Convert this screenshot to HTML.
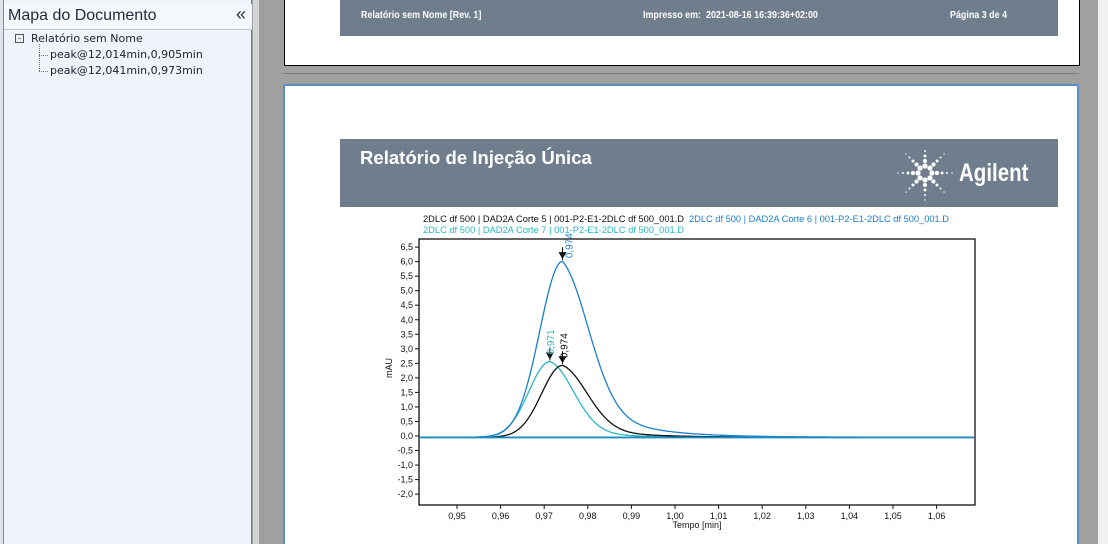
<!DOCTYPE html>
<html><head><meta charset="utf-8"><style>
html,body{overflow:hidden}
body{margin:0;width:1108px;height:544px;overflow:hidden;background:#a0a0a0;font-family:"Liberation Sans",sans-serif;position:relative}
.abs{position:absolute}
#left{left:0;top:0;width:252px;height:544px;background:#eef4fa;border-right:1px solid #7a7a7a;box-sizing:border-box}
#lhead{left:4px;top:4px;width:248px;height:26px;border-bottom:1px solid #b8c4d0;font:16px "Liberation Sans",sans-serif;color:#1e2b3a;box-sizing:border-box;padding:3px 0 0 4px;background:#f4f8fc}
.tree{font:11px "DejaVu Sans",sans-serif;color:#1e2030}
</style></head><body>
<div id="left" class="abs"></div>
<div class="abs" style="left:0;top:0;width:4px;height:544px;background:#dde3ea"></div>
<div class="abs" style="left:3px;top:0;width:1px;height:544px;background:#8a8a8a"></div>
<div id="lhead" class="abs">Mapa do Documento<span style="position:absolute;right:6px;top:0;font-size:18px;color:#333">«</span></div>
<div class="abs" style="left:15px;top:34px;width:7px;height:7px;border:1px solid #555;font-size:9px;line-height:7px;text-align:center;color:#333">-</div>
<div class="abs tree" style="left:31px;top:32px">Relatório sem Nome</div>
<div class="abs" style="left:39px;top:44px;width:0;height:27px;border-left:1px dotted #777"></div>
<div class="abs" style="left:39px;top:55px;width:9px;border-top:1px dotted #777"></div>
<div class="abs" style="left:39px;top:71px;width:9px;border-top:1px dotted #777"></div>
<div class="abs tree" style="left:50px;top:48px">peak@12,014min,0,905min</div>
<div class="abs tree" style="left:50px;top:64px">peak@12,041min,0,973min</div>
<div class="abs" style="left:253px;top:0;width:6px;height:544px;background:#d4d4d4"></div>
<div class="abs" style="left:1098px;top:0;width:10px;height:544px;background:#f0f0f0"></div>

<div class="abs" style="left:284px;top:0;width:794px;height:65px;background:#fff;border:1px solid #000;border-top:none"></div>
<div class="abs" style="left:340px;top:0;width:718px;height:36px;background:#6f7d8c;color:#fff;font:bold 10.5px 'Liberation Sans',sans-serif">
<span class="abs" style="left:21px;top:9px;transform:scaleX(.85);transform-origin:0 0;white-space:nowrap">Relatório sem Nome [Rev. 1]</span>
<span class="abs" style="left:303px;top:9px;transform:scaleX(.85);transform-origin:0 0;white-space:nowrap">Impresso em:&nbsp; 2021-08-16 16:39:36+02:00</span>
<span class="abs" style="left:610px;top:9px;transform:scaleX(.85);transform-origin:0 0;white-space:nowrap">Página 3 de 4</span></div>
<div class="abs" style="left:283px;top:73px;width:796px;height:1px;background:#7c7c7c"></div>
<div class="abs" style="left:283px;top:84px;width:796px;height:460px;background:#fff;border:2px solid #5a8fc4;border-bottom:none;box-sizing:border-box"></div>
<div class="abs" style="left:340px;top:139px;width:718px;height:68px;background:#6f7d8c">
<span class="abs" style="left:20px;top:9px;color:#fff;font:bold 18px 'Liberation Sans',sans-serif;transform:scaleX(1.03);transform-origin:0 0;white-space:nowrap">Relatório de Injeção Única</span>
<span class="abs" style="left:619px;top:20px;color:#fff;font:bold 25px 'Liberation Sans',sans-serif;transform:scaleX(.82);transform-origin:0 0">Agilent</span>
<svg class="abs" style="left:555px;top:8px" width="60" height="60" id="spark"></svg>
</div>
<svg class="abs" style="left:340px;top:208px" width="720" height="330" id="ch" font-family="Liberation Sans, sans-serif">
<text x="83" y="14" font-size="9.3" fill="#111" textLength="261">2DLC df 500 | DAD2A Corte 5 | 001-P2-E1-2DLC df 500_001.D</text>
<text x="349" y="14" font-size="9.3" fill="#1a7fd0" textLength="260">2DLC df 500 | DAD2A Corte 6 | 001-P2-E1-2DLC df 500_001.D</text>
<text x="83" y="25" font-size="9.3" fill="#2ab8c0" textLength="261">2DLC df 500 | DAD2A Corte 7 | 001-P2-E1-2DLC df 500_001.D</text>
<rect x="79" y="31" width="556" height="266" fill="none" stroke="#111" stroke-width="1.3"/>
<text transform="translate(52,160) rotate(-90)" font-size="9" fill="#111" text-anchor="middle">mAU</text>
<text x="357" y="320" font-size="9" fill="#111" text-anchor="middle">Tempo [min]</text>
<g id="g"></g>
</svg>
<script>
var ns="http://www.w3.org/2000/svg",g=document.getElementById('g');
function el(t,a,txt){var e=document.createElementNS(ns,t);for(var k in a)e.setAttribute(k,a[k]);if(txt)e.textContent=txt;g.appendChild(e);return e}
var Y0=228;
function px(t){return 117+(t-0.95)*4360}
function py(v){return Y0-v*29.06}
for(var i=-4;i<=13;i++){var v=i*0.5;var y=py(v);el('line',{x1:75,x2:79,y1:y,y2:y,stroke:'#111'});
el('text',{x:73,y:y+3,'font-size':9,'text-anchor':'end',fill:'#111'},v.toFixed(1).replace('.',','))}
for(var i=0;i<=11;i++){var t=0.95+i*0.01,x=px(t);el('line',{x1:x,x2:x,y1:297,y2:301,stroke:'#111'});
el('text',{x:x,y:311,'font-size':9,'text-anchor':'middle',fill:'#111'},t.toFixed(2).replace('.',','))}
function curve(h,c,sl,sr,tau,w,col){var d='';for(var x=80;x<=634;x+=1){var t=(x-117)/4360+0.95,dd=t-c,f;
if(dd<0)f=h*Math.exp(-dd*dd/(2*sl*sl));else{var gg=Math.exp(-dd*dd/(2*sr*sr));f=h*((1-w)*gg+w*Math.exp(-dd/tau))}
f-=0.04;d+=(x==80?'M':'L')+x+','+py(f).toFixed(1)}
el('path',{d:d,fill:'none',stroke:col,'stroke-width':1.3})}
curve(2.6,0.9713,0.0048,0.0055,0.009,0.15,'#2ab8c0');
curve(2.47,0.9742,0.0048,0.0058,0.01,0.22,'#111');
curve(6.05,0.9742,0.0052,0.0062,0.011,0.3,'#1a7fd0');
el('line',{x1:80,x2:634,y1:py(-0.05),y2:py(-0.05),stroke:'#1a8cc0','stroke-width':1.8});
function mk(x,y){el('path',{d:'M'+(x-4)+','+(y-8)+'L'+(x+4)+','+(y-8)+'L'+x+','+(y-1)+'Z',fill:'#111'});el('line',{x1:x,x2:x,y1:y-13,y2:y,stroke:'#111'})}
mk(px(0.9742),py(6.05));mk(px(0.9713),py(2.6));mk(px(0.9742),py(2.47));
function vt(x,y,s,col){el('text',{transform:'translate('+x+','+y+') rotate(-90)','font-size':10,fill:col},s)}
vt(px(0.9742)+10,py(6.05)-2,'0,974','#1a7fd0');vt(px(0.9713)+4,py(2.6)-6,'0,971','#2ab8c0');vt(px(0.9742)+5,py(2.47)-6,'0,974','#111');
var s=document.getElementById('spark');
for(var k=0;k<8;k++){var a=k*Math.PI/4;for(var j=0;j<5;j++){var r=7+j*5,rr=[2.6,2.1,1.5,1,0.7][j];var c=document.createElementNS(ns,'circle');
c.setAttribute('cx',30+r*Math.cos(a));c.setAttribute('cy',26+r*Math.sin(a));c.setAttribute('r',rr);c.setAttribute('fill','#fff');s.appendChild(c)}}
</script>
</body></html>
